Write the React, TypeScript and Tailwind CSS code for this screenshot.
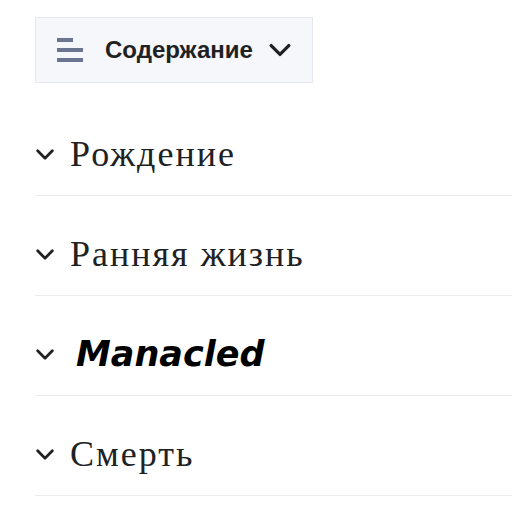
const sections = [
  { title: 'Рождение', kind: 'serif' },
  { title: 'Ранняя жизнь', kind: 'serif' },
  { title: 'Manacled', kind: 'logo' },
  { title: 'Смерть', kind: 'serif' },
];

function Chevron({ className }: { className?: string }) {
  return (
    <svg viewBox="0 0 20 12" className={className} fill="none">
      <path
        d="M2 2 L10 10 L18 2"
        stroke="currentColor"
        strokeWidth="3"
        strokeLinecap="round"
        strokeLinejoin="round"
      />
    </svg>
  );
}

function TocIcon() {
  return (
    <svg viewBox="0 0 26 26" className="w-[26px] h-[26px] text-[#6b7490]">
      <rect x="0" y="1" width="16" height="4" fill="currentColor" />
      <rect x="0" y="11" width="26" height="4" fill="currentColor" />
      <rect x="0" y="21" width="26" height="4" fill="currentColor" />
    </svg>
  );
}

export default function App() {
  return (
    <div className="min-h-screen bg-white pl-[35px] pt-[17px] overflow-hidden">
      <button className="w-[278px] h-[66px] bg-[#f6f7fa] border border-[#e6e8ee] flex items-center pl-[21px] gap-[22px]">
        <TocIcon />
        <span className="text-[24px] font-bold text-[#202122] font-['Liberation_Sans',Arial,sans-serif]">
          Содержание
        </span>
        <Chevron className="w-[22px] h-[14px] text-[#202122] -ml-[6px]" />
      </button>
      <div className="mt-[13px]">
        {sections.map((s) => (
          <div
            key={s.title}
            className="h-[100px] border-b border-[#eaecf0] flex items-end pb-[21px]"
          >
            <div className="flex items-center h-[40px]">
              <Chevron className="w-[20px] h-[11px] text-[#202122]" />
              {s.kind === 'logo' ? (
                <span className="ml-[21px] text-[35px] leading-none font-bold italic text-black font-['DejaVu_Sans',sans-serif]">
                  {s.title}
                </span>
              ) : (
                <span className="ml-[15px] text-[36px] leading-none tracking-[2px] text-[#202122] font-['Liberation_Serif','Times_New_Roman',serif]">
                  {s.title}
                </span>
              )}
            </div>
          </div>
        ))}
      </div>
    </div>
  );
}
